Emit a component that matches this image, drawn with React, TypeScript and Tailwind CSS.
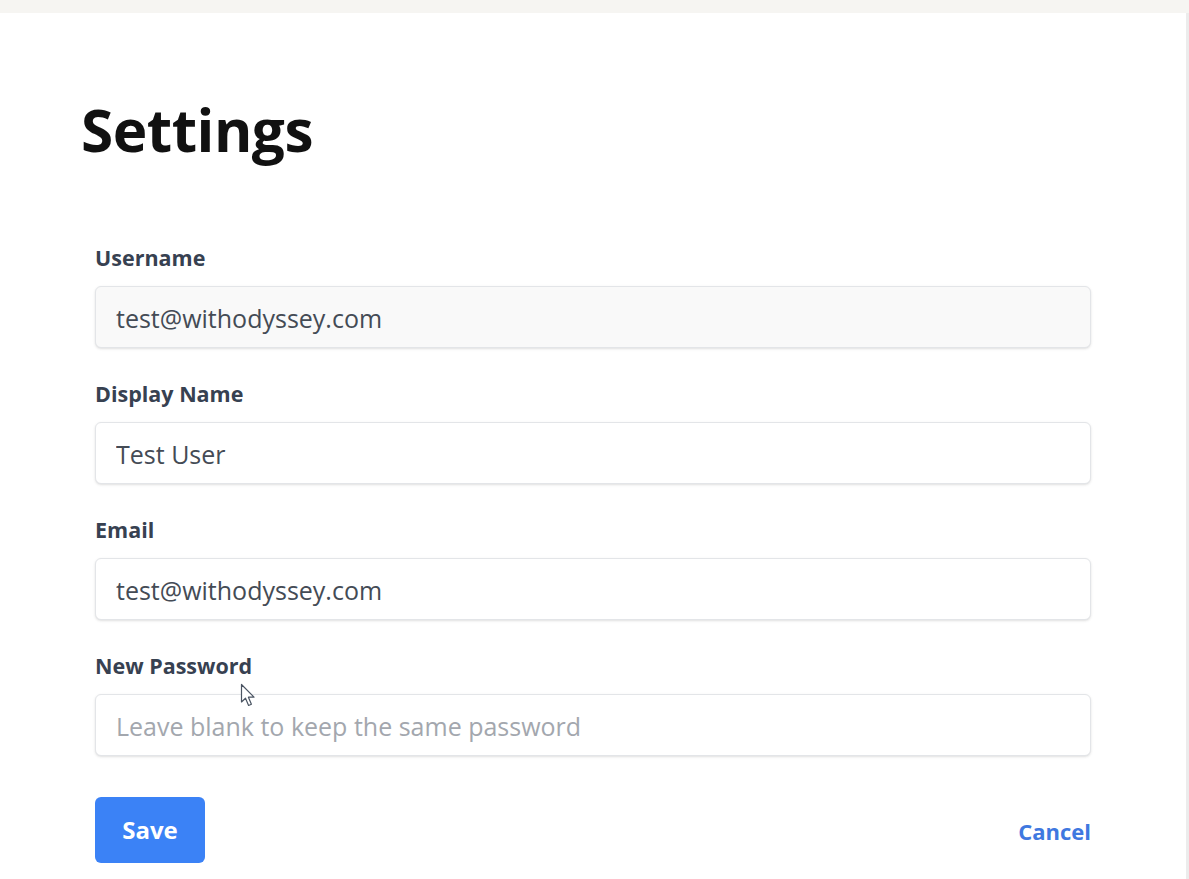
import React from "react";

const fields = [
  { label: "Username", value: "test@withodyssey.com", disabled: true },
  { label: "Display Name", value: "Test User" },
  { label: "Email", value: "test@withodyssey.com" },
  { label: "New Password", value: "", placeholder: "Leave blank to keep the same password" },
];

function Cursor() {
  return (
    <svg
      className="pointer-events-none absolute left-[240px] top-[683px]"
      width="18"
      height="26"
      viewBox="0 0 18 26"
      aria-hidden
    >
      <path
        d="M1.5 1.5 L1.5 19 L5.5 15.2 L8.6 22.5 L11.4 21.3 L8.4 14.2 L14 14.2 Z"
        fill="#ffffff"
        stroke="#4b5563"
        strokeWidth="1.2"
        strokeLinejoin="round"
      />
    </svg>
  );
}

export default function App() {
  return (
    <div className="relative flex min-h-[879px] flex-col bg-white font-['Open_Sans','Noto_Sans',sans-serif]">
      {/* strip along the top of the captured window */}
      <div className="h-[13px] bg-[#f6f5f2]" />
      <div className="flex flex-1">
        <main className="flex-1 pb-10">
          <h1 className="ml-[81px] mt-[87px] text-[58.5px] font-bold leading-none tracking-[-0.5px] text-[#111111]">
            Settings
          </h1>

          <form className="ml-[95px] mt-[85px] flex w-[996px] flex-col gap-[32px]">
            {fields.map((f) => (
              <div key={f.label} className="flex flex-col">
                <label className="mb-[14px] text-[21.5px] font-bold leading-[28px] text-[#374151]">
                  {f.label}
                </label>
                <input
                  defaultValue={f.value}
                  placeholder={f.placeholder}
                  disabled={f.disabled}
                  type="text"
                  className={
                    "h-[62px] rounded-md border border-[#e3e5e8] px-5 pt-[3px] text-[25px] text-[#444b55] shadow-sm outline-none placeholder:text-[#a3a7ae] " +
                    (f.disabled ? "bg-[#f9f9f9]" : "bg-white")
                  }
                />
              </div>
            ))}

            <div className="mt-[9px] flex items-center justify-between">
              <button
                type="button"
                className="h-[66px] w-[110px] rounded-md bg-[#3b82f6] text-[24px] font-bold text-white"
              >
                Save
              </button>
              <a className="mt-[3px] text-[22px] font-bold text-[#3f78e0]">Cancel</a>
            </div>
          </form>
        </main>
        <div className="w-[3px] bg-[#ececec]" />
      </div>
      <Cursor />
    </div>
  );
}
